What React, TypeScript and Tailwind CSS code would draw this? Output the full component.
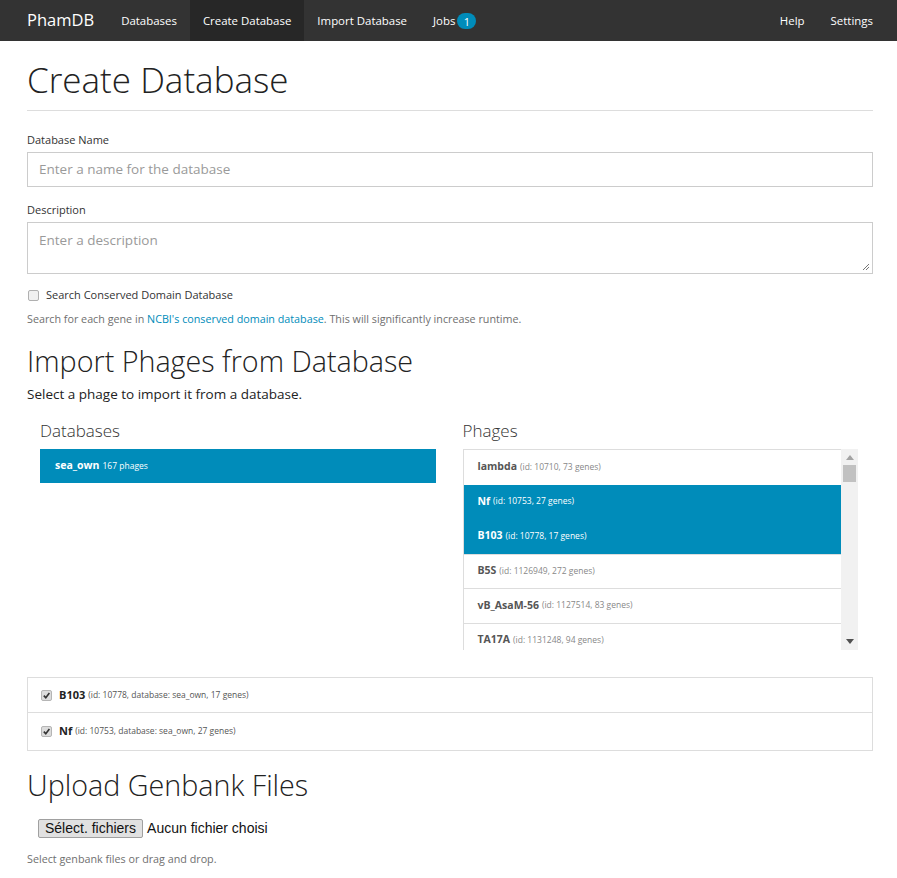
import React from "react";

const font = { fontFamily: '"Open Sans", "Liberation Sans", sans-serif' };

function NavItem({ children, active }: { children: React.ReactNode; active?: boolean }) {
  return (
    <div className={`flex h-full items-center px-[13px] pt-px text-[11.45px] ${active ? "bg-[#272727]" : ""} text-white`}>
      {children}
    </div>
  );
}

const phages = [
  { name: "lambda", info: "(id: 10710, 73 genes)", sel: false },
  { name: "Nf", info: "(id: 10753, 27 genes)", sel: true },
  { name: "B103", info: "(id: 10778, 17 genes)", sel: true },
  { name: "B5S", info: "(id: 1126949, 272 genes)", sel: false },
  { name: "vB_AsaM-56", info: "(id: 1127514, 83 genes)", sel: false },
  { name: "TA17A", info: "(id: 1131248, 94 genes)", sel: false },
];

function Check() {
  return (
    <span className="inline-flex h-[11px] w-[11px] items-center justify-center rounded-[2px] border border-[#b5b5b5] bg-[#dcdcdc]">
      <svg width="9" height="9" viewBox="0 0 10 10">
        <path d="M2 5.2 L4.2 7.4 L8.2 2.2" stroke="#333" strokeWidth="1.8" fill="none" />
      </svg>
    </span>
  );
}

export default function App() {
  return (
    <div className="min-h-[878px] bg-white text-[#222]" style={font}>
      {/* Navbar */}
      <div className="flex h-[41px] items-center bg-[#333333] pl-[13.5px] pr-[11px]">
        <div className="flex h-full items-center pl-[13.5px] pr-[14px] text-[16.5px] text-white">PhamDB</div>
        <NavItem>Databases</NavItem>
        <NavItem active>Create Database</NavItem>
        <NavItem>Import Database</NavItem>
        <NavItem>
          Jobs
          <span className="ml-[2px] inline-flex h-[16px] min-w-[19px] items-center justify-center rounded-full bg-[#008cba] px-[6px] text-[11px] leading-none text-white">
            1
          </span>
        </NavItem>
        <div className="flex-1" />
        <NavItem>Help</NavItem>
        <NavItem>Settings</NavItem>
      </div>

      <div className="pl-[27px] pr-[24px]">
        <h1 className="mt-[18px] border-b border-[#dddddd] pb-[9px] text-[35px] font-light leading-[42px] text-[#222]">
          Create Database
        </h1>

        <div className="mt-[20px] text-[11px] leading-[18px] text-[#333]">Database Name</div>
        <div className="mt-[3px] flex h-[35px] items-center border border-[#cccccc] px-[11px] text-[13.5px] text-[#9a9a9a]">
          Enter a name for the database
        </div>

        <div className="mt-[14px] text-[11px] leading-[18px] text-[#333]">Description</div>
        <div className="relative mt-[3px] h-[52px] border border-[#cccccc] px-[11px] pt-[7px] text-[13.5px] text-[#9a9a9a]">
          Enter a description
          <svg className="absolute bottom-[2px] right-[2px]" width="8" height="8" viewBox="0 0 8 8">
            <path d="M7 1 L1 7 M7 4 L4 7" stroke="#777" strokeWidth="1" />
          </svg>
        </div>

        <div className="mt-[12px] flex items-center gap-[7px] text-[11px] leading-[18px] text-[#333]">
          <span className="ml-px h-[11px] w-[11px] rounded-[2px] border border-[#b0b0b0] bg-[#f0f0f0]" />
          Search Conserved Domain Database
        </div>
        <div className="mt-[7px] text-[10.75px] leading-[17px] text-[#6f6f6f]">
          Search for each gene in <span className="text-[#008cba]">NCBI's conserved domain database</span>. This will
          significantly increase runtime.
        </div>

        <h2 className="mt-[15px] text-[28.7px] font-light leading-[36px] text-[#222]">Import Phages from Database</h2>
        <div className="mt-[5px] text-[13.5px] leading-[20px] text-[#222]">Select a phage to import it from a database.</div>

        <div className="mt-[15px] grid grid-cols-2 gap-[27px] pl-[13px] pr-[15px]">
          <div>
            <div className="text-[17px] font-light leading-[24px] text-[#333]">Databases</div>
            <div className="mt-[6px] flex h-[34px] items-center bg-[#008cba] px-[15px] text-white">
              <span className="text-[10.5px] font-bold">sea_own</span>
              <span className="ml-[3px] text-[8.5px]">167 phages</span>
            </div>
          </div>
          <div>
            <div className="text-[17px] font-light leading-[24px] text-[#333]">Phages</div>
            <div className="mt-[6px] flex h-[201px] overflow-hidden">
              <div className="flex-1 overflow-hidden border-l border-t border-[#dddddd]">
                {phages.map((p, i) => (
                  <div
                    key={p.name}
                    className={`flex h-[34.5px] items-center px-[14px] ${
                      p.sel ? "bg-[#008cba] text-white" : "bg-white text-[#555]"
                    } ${!p.sel && i > 0 ? "border-t border-[#dddddd]" : ""}`}
                  >
                    <span className="text-[10.5px] font-bold">{p.name}</span>
                    <span className={`ml-[3px] text-[8.5px] ${p.sel ? "text-white" : "text-[#888]"}`}>{p.info}</span>
                  </div>
                ))}
              </div>
              <div className="flex w-[17px] flex-col items-center bg-[#f1f1f1]">
                <svg className="mt-[6px]" width="8" height="5" viewBox="0 0 8 5">
                  <path d="M0 5 L4 0 L8 5 Z" fill="#a3a3a3" />
                </svg>
                <div className="mt-[5px] h-[17px] w-[13px] bg-[#c1c1c1]" />
                <div className="flex-1" />
                <svg className="mb-[6px]" width="8" height="5" viewBox="0 0 8 5">
                  <path d="M0 0 L4 5 L8 0 Z" fill="#505050" />
                </svg>
              </div>
            </div>
          </div>
        </div>

        <div className="mt-[27px] border border-[#dddddd]">
          <div className="flex h-[35px] items-center gap-[7px] border-b border-[#dddddd] px-[13px]">
            <Check />
            <span className="text-[11px] font-bold text-[#222]">B103</span>
            <span className="-ml-[4px] text-[8.5px] text-[#555]">(id: 10778, database: sea_own, 17 genes)</span>
          </div>
          <div className="flex h-[37px] items-center gap-[7px] px-[13px]">
            <Check />
            <span className="text-[11px] font-bold text-[#222]">Nf</span>
            <span className="-ml-[4px] text-[8.5px] text-[#555]">(id: 10753, database: sea_own, 27 genes)</span>
          </div>
        </div>

        <h2 className="mt-[16px] text-[28.7px] font-light leading-[36px] text-[#222]">Upload Genbank Files</h2>
        <div className="mt-[15px] flex items-center pl-[11px]" style={{ fontFamily: '"Liberation Sans", Arial, sans-serif' }}>
          <span className="flex h-[19px] items-center rounded-[2px] border border-[#a0a0a0] bg-[#e1e1e1] px-[6px] text-[14px] text-[#111]">
            Sélect. fichiers
          </span>
          <span className="ml-[4px] text-[14px] text-[#111]">Aucun fichier choisi</span>
        </div>
        <div className="mt-[12px] text-[10.75px] leading-[17px] text-[#6f6f6f]">Select genbank files or drag and drop.</div>
      </div>
    </div>
  );
}
